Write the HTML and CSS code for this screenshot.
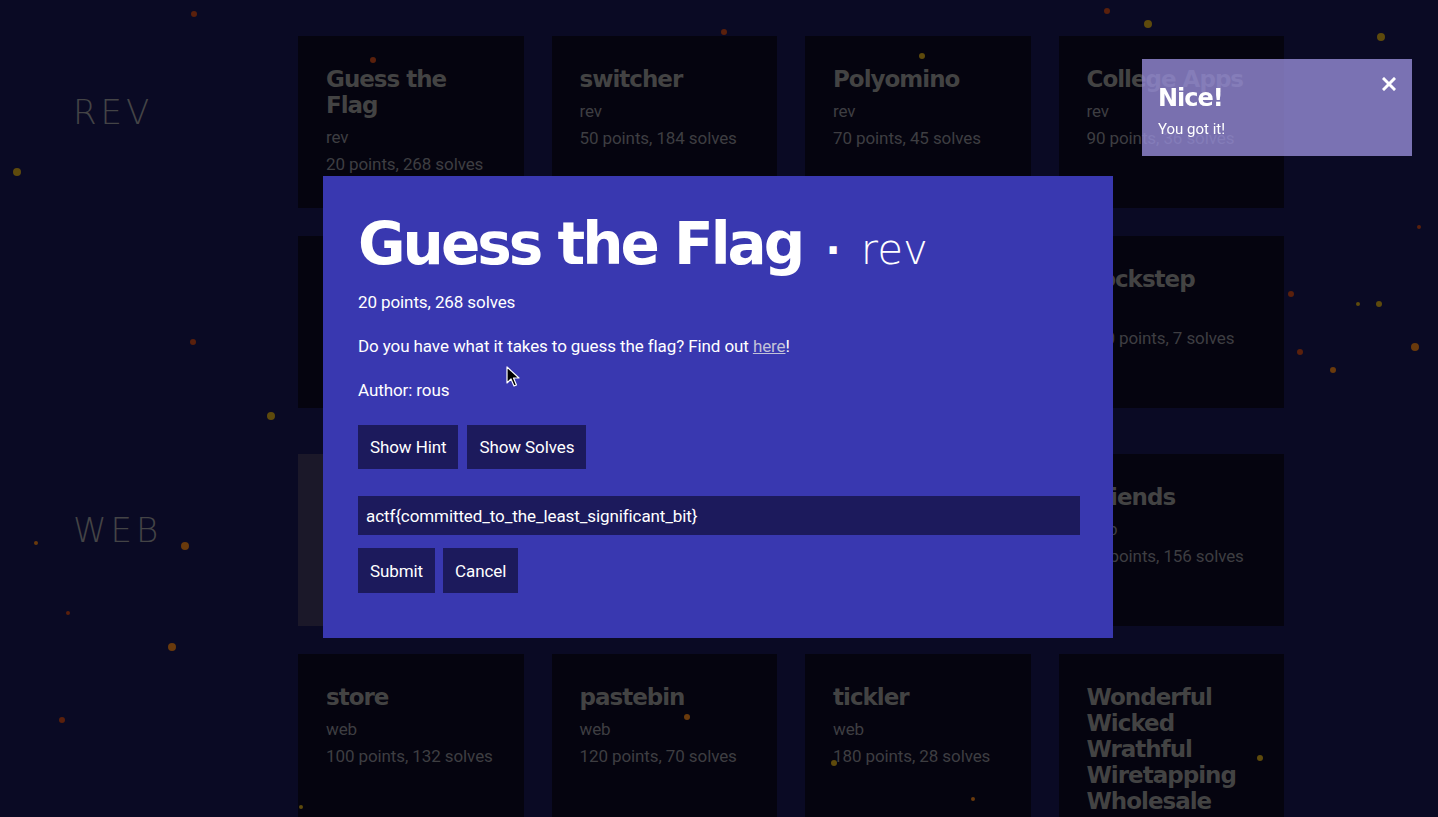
FILE: index.html
```html
<!DOCTYPE html>
<html>
<head>
<meta charset="utf-8">
<title>Challenges</title>
<link rel="stylesheet" href="styles.css">
</head>
<body>
<div class="page">
  <section class="cat">
    <h2 class="cat-label">REV</h2>
    <div class="grid">
      <div class="card"><h3 class="card-title">Guess the Flag</h3><p class="meta">rev</p><p class="meta">20 points, 268 solves</p></div>
      <div class="card"><h3 class="card-title">switcher</h3><p class="meta">rev</p><p class="meta">50 points, 184 solves</p></div>
      <div class="card"><h3 class="card-title">Polyomino</h3><p class="meta">rev</p><p class="meta">70 points, 45 solves</p></div>
      <div class="card"><h3 class="card-title">College Apps</h3><p class="meta">rev</p><p class="meta">90 points, 36 solves</p></div>
      <div class="card"><h3 class="card-title">Windows of Opportunity</h3><p class="meta">rev</p><p class="meta">100 points, 60 solves</p></div>
      <div class="card"><h3 class="card-title">Green Thumb</h3><p class="meta">rev</p><p class="meta">140 points, 18 solves</p></div>
      <div class="card"><h3 class="card-title">SignIn</h3><p class="meta">rev</p><p class="meta">160 points, 12 solves</p></div>
      <div class="card"><h3 class="card-title">Lockstep</h3><p class="meta">rev</p><p class="meta">200 points, 7 solves</p></div>
    </div>
  </section>
  <section class="cat">
    <h2 class="cat-label">WEB</h2>
    <div class="grid">
      <div class="card card-hover"><h3 class="card-title">Madlibbin</h3><p class="meta">web</p><p class="meta">50 points, 200 solves</p></div>
      <div class="card"><h3 class="card-title">Consolation</h3><p class="meta">web</p><p class="meta">50 points, 180 solves</p></div>
      <div class="card"><h3 class="card-title">Woooosh</h3><p class="meta">web</p><p class="meta">70 points, 170 solves</p></div>
      <div class="card"><h3 class="card-title">Friends</h3><p class="meta">web</p><p class="meta">80 points, 156 solves</p></div>
      <div class="card"><h3 class="card-title">store</h3><p class="meta">web</p><p class="meta">100 points, 132 solves</p></div>
      <div class="card"><h3 class="card-title">pastebin</h3><p class="meta">web</p><p class="meta">120 points, 70 solves</p></div>
      <div class="card"><h3 class="card-title">tickler</h3><p class="meta">web</p><p class="meta">180 points, 28 solves</p></div>
      <div class="card"><h3 class="card-title">Wonderful Wicked Wrathful Wiretapping Wholesale Website</h3><p class="meta">web</p><p class="meta">200 points, 10 solves</p></div>
    </div>
  </section>
</div>

<div class="particles">
  <span class="dot red" style="left:191px;top:11px"></span>
  <span class="dot yel big" style="left:13px;top:168px"></span>
  <span class="dot red" style="left:370px;top:57px"></span>
  <span class="dot red" style="left:721px;top:29px"></span>
  <span class="dot yel" style="left:919px;top:53px"></span>
  <span class="dot red" style="left:1104px;top:8px"></span>
  <span class="dot yel big" style="left:1144px;top:20px"></span>
  <span class="dot yel big" style="left:1377px;top:33px"></span>
  <span class="dot red sm" style="left:1417px;top:225px"></span>
  <span class="dot red" style="left:1288px;top:291px"></span>
  <span class="dot yel sm" style="left:1356px;top:302px"></span>
  <span class="dot yel" style="left:1376px;top:301px"></span>
  <span class="dot org big" style="left:1411px;top:343px"></span>
  <span class="dot red" style="left:1297px;top:349px"></span>
  <span class="dot org" style="left:1330px;top:367px"></span>
  <span class="dot red" style="left:190px;top:339px"></span>
  <span class="dot yel big" style="left:267px;top:412px"></span>
  <span class="dot org sm" style="left:34px;top:541px"></span>
  <span class="dot org big" style="left:181px;top:542px"></span>
  <span class="dot red sm" style="left:66px;top:611px"></span>
  <span class="dot org big" style="left:168px;top:643px"></span>
  <span class="dot red" style="left:59px;top:717px"></span>
  <span class="dot yel sm" style="left:299px;top:805px"></span>
  <span class="dot org" style="left:684px;top:714px"></span>
  <span class="dot yel" style="left:831px;top:760px"></span>
  <span class="dot yel" style="left:1257px;top:755px"></span>
  <span class="dot org sm" style="left:971px;top:797px"></span>
</div>

<div class="overlay">
  <div class="modal">
    <h1 class="modal-title">Guess the Flag <span class="sep">·</span> <span class="modal-cat">rev</span></h1>
    <p class="modal-text">20 points, 268 solves</p>
    <p class="modal-text">Do you have what it takes to guess the flag? Find out <a href="#" class="link">here</a>!</p>
    <p class="modal-text">Author: rous</p>
    <div class="btn-row">
      <button class="btn">Show Hint</button>
      <button class="btn">Show Solves</button>
    </div>
    <input class="flag-input" type="text" value="actf{committed_to_the_least_significant_bit}">
    <div class="btn-row btn-row-tight">
      <button class="btn btn-tall">Submit</button>
      <button class="btn btn-tall">Cancel</button>
    </div>
  </div>
</div>

<div class="toast">
  <div class="toast-body">
    <div class="toast-title">Nice!</div>
    <div class="toast-text">You got it!</div>
  </div>
  <button class="toast-close" aria-label="close">
    <svg width="14" height="14" viewBox="0 0 14 14"><path d="M2 2 L12 12 M12 2 L2 12" stroke="#fff" stroke-width="3" stroke-linecap="square"/></svg>
  </button>
</div>

<svg class="cursor" width="14" height="22" viewBox="0 0 14 22"><path d="M1 1 L1 17 L5 13 L8 20 L10.5 19 L7.5 12 L13 12 Z" fill="#000" stroke="#fff" stroke-width="1.2" stroke-linejoin="round"/></svg>
</body>
</html>
```

FILE: styles.css
```css
* { box-sizing: border-box; }
html, body { margin: 0; padding: 0; }
body {
  background: #0a0a24;
  width: 1438px;
  height: 817px;
  overflow: hidden;
  font-family: "Roboto", "Liberation Sans", sans-serif;
  color: #fff;
}
.page {
  padding-top: 36px;
}
.cat {
  display: flex;
  margin-bottom: 46px;
}
.cat-label {
  width: 298px;
  flex: none;
  margin: 0;
  padding: 58px 0 0 73px;
  font-family: "DejaVu Sans", sans-serif;
  font-weight: 200;
  font-size: 34px;
  line-height: 36px;
  letter-spacing: 4px;
  color: #444446;
}
.grid {
  display: grid;
  grid-template-columns: repeat(4, 225.5px);
  grid-auto-rows: 172px;
  gap: 28px;
}
.card {
  background: #05040f;
  padding: 30px 26px 0 28px;
  overflow: hidden;
}
.card-hover { background: #1b1829; }
.card-title {
  margin: 0 0 6px;
  font-family: "DejaVu Sans", sans-serif;
  font-weight: 700;
  font-size: 23px;
  line-height: 26px;
  letter-spacing: -1px;
  color: #434343;
}
.meta {
  margin: 0;
  font-size: 17px;
  line-height: 27px;
  letter-spacing: -0.1px;
  color: #3e3e42;
  white-space: nowrap;
}
.particles .dot {
  position: absolute;
  width: 6px;
  height: 6px;
  border-radius: 50%;
}
.dot.sm { width: 4px; height: 4px; }
.dot.big { width: 8px; height: 8px; }
.dot.red { background: #5a200c; }
.dot.yel { background: #5e4a0c; }
.dot.org { background: #6a3a0c; }

.overlay {
  position: fixed;
  inset: 0;
  display: flex;
  align-items: flex-start;
  justify-content: center;
  padding-top: 176px;
}
.modal {
  width: 790px;
  height: 462px;
  margin-left: -2px;
  background: #3938b0;
  padding: 33px 35px 44px;
}
.modal-title {
  margin: 0 0 5px;
  font-family: "DejaVu Sans", sans-serif;
  font-weight: 700;
  font-size: 58px;
  line-height: 70px;
  letter-spacing: -3px;
  white-space: nowrap;
}
.sep {
  font-size: 40px;
  font-weight: 700;
  margin: 0 6px;
}
.modal-cat {
  font-size: 42px;
  font-weight: 200;
  letter-spacing: 0;
}
.modal-text {
  margin: 0 0 20px;
  font-size: 17px;
  line-height: 24px;
  letter-spacing: -0.1px;
}
.link {
  color: #c2c2d8;
  text-decoration: underline;
}
.btn-row {
  display: flex;
  gap: 9px;
  margin-top: 23px;
}
.btn-row-tight { margin-top: 13px; gap: 8px; }
.btn {
  font-family: inherit;
  font-size: 17px;
  letter-spacing: -0.1px;
  color: #fff;
  background: #1c1a5c;
  border: none;
  height: 44px;
  padding: 0 12px;
}
.btn-tall { height: 45px; }
.flag-input {
  display: block;
  margin-top: 27px;
  width: 722px;
  height: 39px;
  border: none;
  background: #1c1a5c;
  color: #fff;
  font-family: inherit;
  font-size: 17px;
  letter-spacing: -0.1px;
  padding: 0 8px;
  outline: none;
}

.toast {
  position: fixed;
  left: 1142px;
  top: 59px;
  width: 270px;
  height: 97px;
  background: rgba(150, 140, 215, 0.8);
  display: flex;
  justify-content: space-between;
  padding: 24px 16px 0 16px;
}
.toast-title {
  font-family: "DejaVu Sans", sans-serif;
  font-weight: 700;
  font-size: 24px;
  line-height: 30px;
  letter-spacing: -1px;
}
.toast-text {
  margin-top: 6px;
  font-size: 15px;
  line-height: 20px;
}
.toast-close {
  background: none;
  border: none;
  padding: 0;
  margin-top: -8px;
  height: 20px;
}
.cursor {
  position: fixed;
  left: 506px;
  top: 366px;
}
```
